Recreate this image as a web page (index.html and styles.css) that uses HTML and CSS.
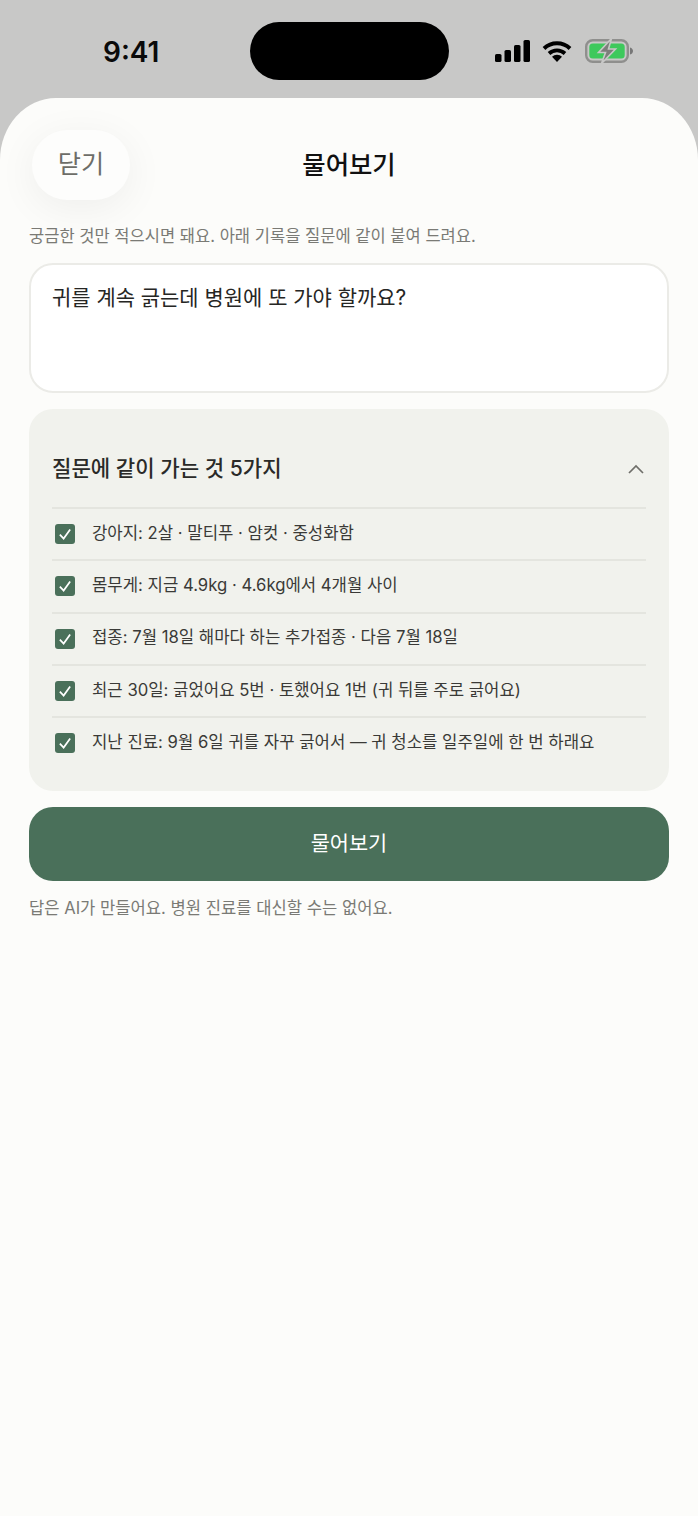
FILE: index.html
```html
<!DOCTYPE html>
<html lang="ko">
<head>
<meta charset="utf-8">
<title>물어보기</title>
<link rel="stylesheet" href="styles.css">
</head>
<body>
<div class="phone">
  <div class="status">
    <div class="time">9:41</div>
    <div class="island"></div>
    <div class="status-icons">
      <svg class="sig" width="35" height="22" viewBox="0 0 35 22"><rect x="0" y="14" width="6.5" height="8" rx="1.6"/><rect x="9.5" y="10" width="6.5" height="12" rx="1.6"/><rect x="19" y="5" width="6.5" height="17" rx="1.6"/><rect x="28.5" y="0" width="6.5" height="22" rx="1.6"/></svg>
      <svg class="wifi" width="30" height="22" viewBox="0 0 30 22"><path d="M2 8.5 A19 19 0 0 1 28 8.5" fill="none" stroke="#000" stroke-width="4"/><path d="M7 13.5 A12 12 0 0 1 23 13.5" fill="none" stroke="#000" stroke-width="3.8"/><path d="M15 22 L10 16.8 A7 7 0 0 1 20 16.8 Z" fill="#000"/></svg>
      <svg class="batt" width="48" height="24" viewBox="0 0 48 24"><rect x="1.2" y="1.2" width="41.6" height="21.6" rx="6.5" fill="none" stroke="#8f8f8d" stroke-width="2.4"/><rect x="4.3" y="4.5" width="35.4" height="15" rx="3.5" fill="#3ec95c"/><path d="M45 8.5 C47 9 48 10.5 48 12 C48 13.5 47 15 45 15.5 Z" fill="#777"/><path d="M26.5 -0.5 L13.5 13.5 H20.5 L16.5 24.5 L30.5 10 H23.5 Z" fill="#7d7d7b" stroke="#c8c8c7" stroke-width="1.6"/></svg>
    </div>
  </div>
  <div class="sheet">
    <header class="head">
      <button class="close">닫기</button>
      <h1 class="title">물어보기</h1>
    </header>
    <p class="hint">궁금한 것만 적으시면 돼요. 아래 기록을 질문에 같이 붙여 드려요.</p>
    <div class="input">귀를 계속 긁는데 병원에 또 가야 할까요?</div>
    <section class="panel">
      <div class="panel-head">
        <h2 class="panel-title">질문에 같이 가는 것 5가지</h2>
        <svg class="chev" width="18" height="12" viewBox="0 0 18 12"><path d="M2 10 L9 3 L16 10" fill="none" stroke="#6f6f6a" stroke-width="1.7"/></svg>
      </div>
      <div class="row"><span class="box"><svg width="16" height="16" viewBox="0 0 14 14"><path d="M2.5 7.5 L5.8 11 L11.5 3" fill="none" stroke="#fff" stroke-width="1.5"/></svg></span><span>강아지: 2살 · 말티푸 · 암컷 · 중성화함</span></div>
      <div class="row"><span class="box"><svg width="16" height="16" viewBox="0 0 14 14"><path d="M2.5 7.5 L5.8 11 L11.5 3" fill="none" stroke="#fff" stroke-width="1.5"/></svg></span><span>몸무게: 지금 4.9kg · 4.6kg에서 4개월 사이</span></div>
      <div class="row"><span class="box"><svg width="16" height="16" viewBox="0 0 14 14"><path d="M2.5 7.5 L5.8 11 L11.5 3" fill="none" stroke="#fff" stroke-width="1.5"/></svg></span><span>접종: 7월 18일 해마다 하는 추가접종 · 다음 7월 18일</span></div>
      <div class="row"><span class="box"><svg width="16" height="16" viewBox="0 0 14 14"><path d="M2.5 7.5 L5.8 11 L11.5 3" fill="none" stroke="#fff" stroke-width="1.5"/></svg></span><span>최근 30일: 긁었어요 5번 · 토했어요 1번 (귀 뒤를 주로 긁어요)</span></div>
      <div class="row"><span class="box"><svg width="16" height="16" viewBox="0 0 14 14"><path d="M2.5 7.5 L5.8 11 L11.5 3" fill="none" stroke="#fff" stroke-width="1.5"/></svg></span><span>지난 진료: 9월 6일 귀를 자꾸 긁어서 — 귀 청소를 일주일에 한 번 하래요</span></div>
    </section>
    <button class="ask">물어보기</button>
    <p class="note">답은 AI가 만들어요. 병원 진료를 대신할 수는 없어요.</p>
  </div>
</div>
</body>
</html>
```

FILE: styles.css
```css
* { box-sizing: border-box; }
html, body { margin: 0; padding: 0; }
body {
  font-family: Inter, "Noto Sans CJK KR", sans-serif;
  background: #c8c8c7;
}
.phone { width: 698px; height: 1516px; display: flex; flex-direction: column; overflow: hidden; }
.status {
  height: 98px;
  flex: none;
  padding: 22px 0 0 0;
  display: flex;
  align-items: flex-start;
}
.time {
  width: 250px;
  padding: 13px 0 0 103px;
  font-size: 28px;
  line-height: 34px;
  font-weight: 600;
  color: #0a0a0a;
}
.island { width: 199px; height: 58px; border-radius: 29px; background: #000; flex: none; }
.status-icons { margin: 17px 0 0 46px; display: flex; align-items: center; gap: 12px; }
.status-icons svg { display: block; flex: none; }
.batt { margin-left: 1px; }
.sheet {
  flex: 1;
  background: #fcfcfa;
  border-radius: 56px 56px 0 0 / 62px 62px 0 0;
  padding: 32px 29px 0;
}
.head { position: relative; height: 70px; display: flex; align-items: center; justify-content: center; }
.close {
  position: absolute;
  left: 3px;
  top: 0;
  width: 98px;
  height: 70px;
  border: 0;
  border-radius: 35px;
  background: #fdfdfc;
  box-shadow: 0 8px 40px rgba(0,0,0,.06);
  font: 400 25.2px/1 Inter, "Noto Sans CJK KR", sans-serif;
  color: #6d6d68;
  padding: 0;
}
.title { margin: 0; font-size: 25.4px; line-height: 70px; font-weight: 500; color: #111; }
.hint { margin: 23px 0 0; font-size: 16.55px; line-height: 26px; color: #7a7a75; }
.input {
  margin-top: 14px;
  height: 130px;
  background: #fff;
  border: 2px solid #ebebe7;
  border-radius: 24px;
  padding: 15px 21px;
  font-size: 20.95px;
  line-height: 35px;
  color: #262624;
}
.panel {
  margin-top: 16px;
  height: 382px;
  background: #f1f2ed;
  border-radius: 24px;
  padding: 0 23px;
}
.panel-head { height: 98px; padding-top: 22px; display: flex; align-items: center; justify-content: space-between; }
.panel-title { margin: 0; font-size: 21.1px; font-weight: 500; color: #2a2a28; line-height: 30px; }
.chev { margin-right: 1px; display: block; }
.row {
  height: 52.3px;
  border-top: 2px solid #e4e5df;
  display: flex;
  align-items: center;
  gap: 17px;
  padding-left: 3px;
  padding-bottom: 3px;
  font-size: 16.7px;
  line-height: 26px;
  color: #3a3a37;
}
.box {
  width: 20px;
  height: 20px;
  flex: none;
  border-radius: 3px;
  background: #4a705a;
  display: flex;
  align-items: center;
  justify-content: center;
  margin-top: 3px;
}
.box svg { display: block; }
.ask {
  display: block;
  width: 100%;
  margin-top: 16px;
  height: 74px;
  border: 0;
  border-radius: 24px;
  background: #4a705a;
  color: #fff;
  font: 400 20.8px/1 Inter, "Noto Sans CJK KR", sans-serif;
  padding: 0;
}
.note { margin: 14px 0 0; font-size: 16.6px; line-height: 26px; color: #7a7a75; }
```
